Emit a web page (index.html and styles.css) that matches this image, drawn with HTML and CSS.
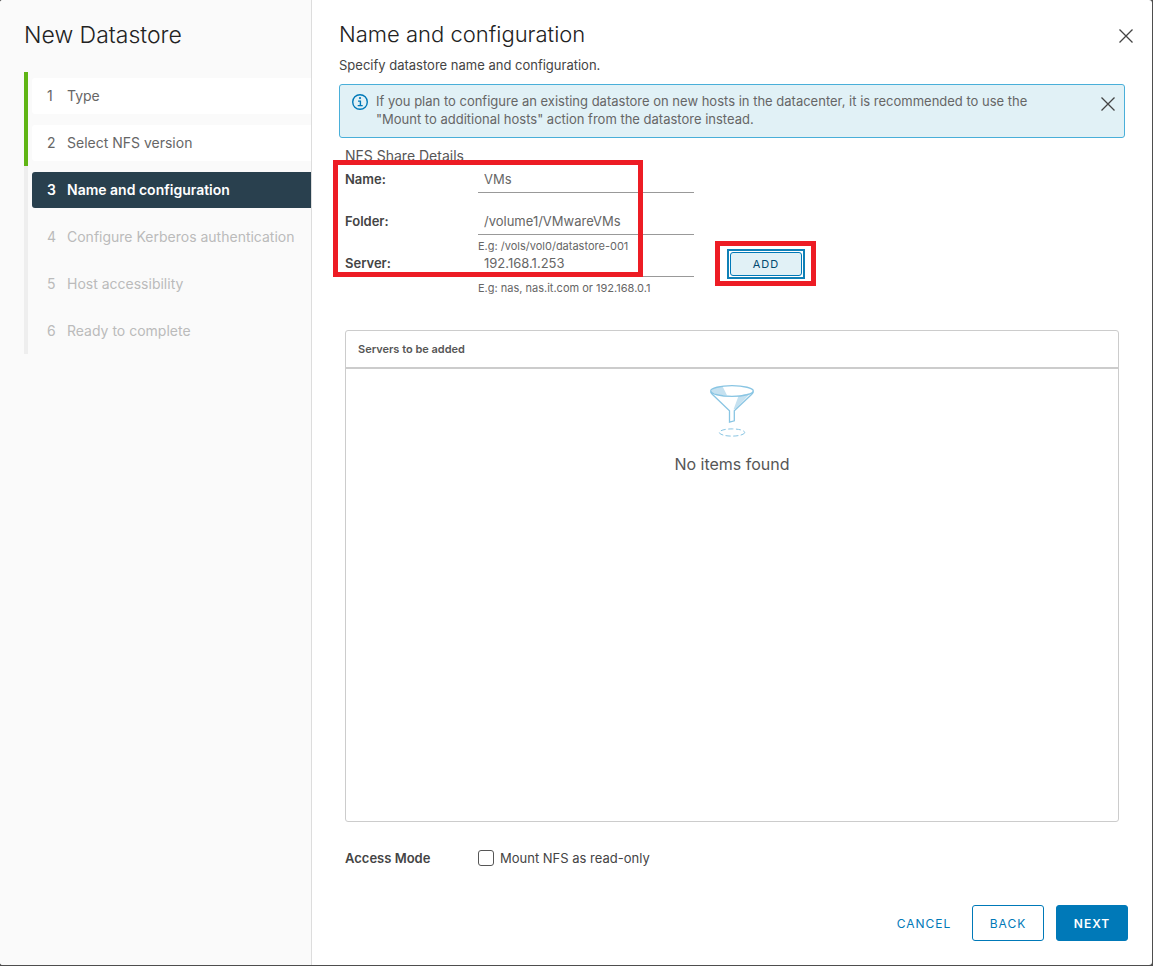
FILE: index.html
```html
<!DOCTYPE html>
<html lang="en">
<head>
<meta charset="utf-8">
<title>New Datastore</title>
<link rel="stylesheet" href="styles.css">
</head>
<body>
<div class="dialog">
  <aside class="sidebar">
    <h1 class="wizard-title">New Datastore</h1>
    <ol class="steps">
      <li class="step done"><button class="step-button" type="button"><span class="step-number">1</span>Type</button></li>
      <li class="step done"><button class="step-button" type="button"><span class="step-number">2</span>Select NFS version</button></li>
      <li class="step current"><button class="step-button" type="button" aria-current="step"><span class="step-number">3</span>Name and configuration</button></li>
      <li class="step"><button class="step-button" type="button" disabled><span class="step-number">4</span>Configure Kerberos authentication</button></li>
      <li class="step"><button class="step-button" type="button" disabled><span class="step-number">5</span>Host accessibility</button></li>
      <li class="step"><button class="step-button" type="button" disabled><span class="step-number">6</span>Ready to complete</button></li>
    </ol>
  </aside>
  <main class="content">
    <header class="page-header">
      <h2 class="page-title">Name and configuration</h2>
      <button class="close" type="button" aria-label="Close wizard">
        <svg width="14" height="14" viewBox="0 0 14 14" fill="none" stroke="currentColor" stroke-width="1.3"><path d="M.5.5l13 13M13.5.5l-13 13"/></svg>
      </button>
    </header>
    <p class="subtitle">Specify datastore name and configuration.</p>
    <div class="alert" role="status">
      <svg class="alert-icon" width="16" height="16" viewBox="0 0 16 16" fill="none" stroke="currentColor"><circle cx="8" cy="8" r="7.3" stroke-width="1.4"/><path d="M6 7.1h2.4v4.3M5.7 11.6h5" stroke-width="1.4"/><circle cx="8" cy="4.1" r="1.1" fill="currentColor" stroke="none"/></svg>
      <p class="alert-text">If you plan to configure an existing datastore on new hosts in the datacenter, it is recommended to use the<br>"Mount to additional hosts" action from the datastore instead.</p>
      <button class="close" type="button" aria-label="Dismiss message">
        <svg width="14" height="14" viewBox="0 0 14 14" fill="none" stroke="currentColor" stroke-width="1.3"><path d="M.5.5l13 13M13.5.5l-13 13"/></svg>
      </button>
    </div>
    <form class="form">
      <h3 class="section-title">NFS Share Details</h3>
      <div class="fields">
        <div class="row">
          <label class="label" for="name">Name:</label>
          <div class="control"><input class="text-input" id="name" type="text" value="VMs"></div>
        </div>
        <div class="row">
          <label class="label" for="folder">Folder:</label>
          <div class="control"><input class="text-input" id="folder" type="text" value="/volume1/VMwareVMs"><span class="hint">E.g: /vols/vol0/datastore-001</span></div>
        </div>
        <div class="row">
          <label class="label" for="server">Server:</label>
          <div class="control"><input class="text-input" id="server" type="text" value="192.168.1.253"><span class="hint">E.g: nas, nas.it.com or 192.168.0.1</span></div>
          <div class="add-wrap"><button class="add" type="button">ADD</button><span class="mark mark-add"></span></div>
        </div>
        <span class="mark mark-fields"></span>
      </div>
      <table class="grid">
        <thead><tr><th scope="col">Servers to be added</th></tr></thead>
        <tbody><tr><td>
          <svg class="funnel" width="46" height="54" viewBox="0 0 46 54" fill="none" stroke="#89c5e3" stroke-width="1.3">
            <path d="M2 8C3 4 9 2.500 13.500 2.200L18 11.300C11 11 4 10 2 8zM29.500 12L42 8.800 27 24.500 24.500 25.500z" fill="#c5e1f0" stroke="none"/>
            <ellipse cx="23" cy="7" rx="21.300" ry="5.300"/>
            <path d="M1.700 7.500Q2 9 3.500 10.500L20.500 26.800V38.200L25.300 36.800V26.800L42.500 10.500Q44 9 44.300 7.500"/>
            <ellipse cx="23" cy="48.500" rx="12.700" ry="3.600" stroke-width="1" stroke-dasharray="5 2.500"/>
          </svg>
          <p class="empty-text">No items found</p>
        </td></tr></tbody>
      </table>
      <div class="access">
        <span class="label">Access Mode</span>
        <label class="check-label"><input class="checkbox" type="checkbox">Mount NFS as read-only</label>
      </div>
    </form>
    <footer class="actions">
      <button class="button link" type="button">CANCEL</button>
      <button class="button outline" type="button">BACK</button>
      <button class="button primary" type="button">NEXT</button>
    </footer>
  </main>
</div>
</body>
</html>
```
FILE: styles.css
```css
* { box-sizing: border-box; }
body {
  margin: 0;
  background: #4e4e4e;
  color: #565656;
  font: 13px/18px Inter, "Open Sans", sans-serif;
}
h1, h2, h3, p, ol { margin: 0; padding: 0; }
button, input { font: inherit; color: inherit; margin: 0; }
button { border: 0; background: none; padding: 0; cursor: pointer; }
.dialog {
  display: flex;
  min-height: calc(100vh - 1px);
  margin: 0 1px 1px 0;
  border-radius: 3px;
  overflow: hidden;
  background: #fff;
}
.sidebar {
  flex: 0 0 312px;
  padding: 20px 0 24px 24px;
  background: #fafafa;
  border-right: 1px solid #ddd;
}
.wizard-title, .page-title {
  font-size: 22px;
  line-height: 30px;
  font-weight: 300;
  color: #222;
}
.wizard-title { font-size: 23px; }
.steps { list-style: none; margin-top: 22px; }
.step { padding: 6px 0 5px 4px; border-left: 4px solid #eee; }
.step.done { border-left-color: #60b515; }
.step-button {
  display: flex;
  align-items: center;
  width: 100%;
  height: 36px;
  padding-left: 15px;
  border-radius: 3px 0 0 3px;
  font-size: 14px;
  text-align: left;
  white-space: nowrap;
}
.step-button:disabled { color: #bbb; }
.step-number { width: 20px; }
.done .step-button { background: #fff; color: #666; }
.current .step-button { background: #29404e; color: #fff; font-weight: 600; }
.content {
  flex: 1;
  min-width: 0;
  display: flex;
  flex-direction: column;
  padding: 19px 24px 24px 27px;
}
.page-header { display: flex; justify-content: space-between; margin-right: -5px; }
.close {
  flex: none;
  display: grid;
  place-items: center;
  width: 14px;
  height: 14px;
  color: #444;
}
.page-header .close { margin: 10px 0 0; }
.subtitle { margin-top: 7px; color: #444; }
.alert {
  display: flex;
  align-items: flex-start;
  margin: 10px 3px 0 0;
  padding: 7px 9px 9px 12px;
  border: 1px solid #49afd9;
  border-radius: 3px;
  background: #e1f1f6;
}
.alert-icon { flex: none; margin: 2px 8px 0 0; color: #0079b8; }
.alert-text { flex: 1; color: #666; }
.alert .close { margin-top: 5px; }
.form { flex: 1; display: flex; flex-direction: column; margin: 9px 9px 0 6px; }
.section-title { font-size: 14px; line-height: 18px; font-weight: 400; height: 21px; }
.fields { position: relative; height: 162px; flex: none; }
.row { display: flex; height: 42px; }
.label { width: 133px; line-height: 22px; font-weight: 600; color: #444; }
.control { width: 216px; }
.text-input {
  display: block;
  width: 100%;
  height: 25px;
  padding: 0 6px 2px;
  border: 0;
  border-bottom: 1px solid #999;
  background: none;
  outline: 0;
  color: #666;
}
.hint { display: block; margin-top: 4px; font-size: 11px; line-height: 14px; white-space: nowrap; color: #666; }
.mark { position: absolute; border: 5px solid #ed1c24; pointer-events: none; }
.mark-fields { top: -8px; left: -12px; width: 310px; height: 117px; }
.add-wrap {
  position: relative;
  width: 72px;
  height: 24px;
  margin-left: 36px;
  outline: 2px solid #0f80b6;
  outline-offset: 1px;
}
.add {
  display: block;
  width: 100%;
  height: 100%;
  border: 1px solid #0079b8;
  border-radius: 3px;
  outline: 0;
  background: #e1f1f6;
  color: #004a70;
  font-size: 11px;
  letter-spacing: 1px;
}
.mark-add { inset: -11px -14px -10px -15px; }
.grid {
  flex: 1;
  display: flex;
  flex-direction: column;
  border: 1px solid #ccc;
  border-radius: 3px;
}
.grid thead, .grid tr, .grid th { display: block; }
.grid th {
  padding: 9px 12px;
  border-bottom: 2px solid #ccc;
  text-align: left;
  font-size: 11px;
  font-weight: 600;
}
.grid tbody, .grid td { display: block; padding: 0; text-align: center; }
.grid td { padding-top: 15px; }
.funnel { display: block; margin: 0 auto; }
.empty-text { margin-top: 14px; font-size: 16px; line-height: 24px; }
.access { display: flex; margin: 25px 0 36px; }
.check-label { display: flex; align-items: center; gap: 6px; color: #444; }
.checkbox {
  appearance: none;
  width: 16px;
  height: 16px;
  border: 1px solid #565656;
  border-radius: 3px;
  background: #fff;
}
.actions { display: flex; justify-content: flex-end; gap: 12px; }
.button {
  min-width: 72px;
  height: 36px;
  padding-top: 1px;
  border: 1px solid #0079b8;
  border-radius: 3px;
  color: #0079b8;
  font-size: 12px;
  letter-spacing: 1px;
}
.link { border-color: transparent; }
.primary { background: #0079b8; color: #fff; font-weight: 600; }
```
